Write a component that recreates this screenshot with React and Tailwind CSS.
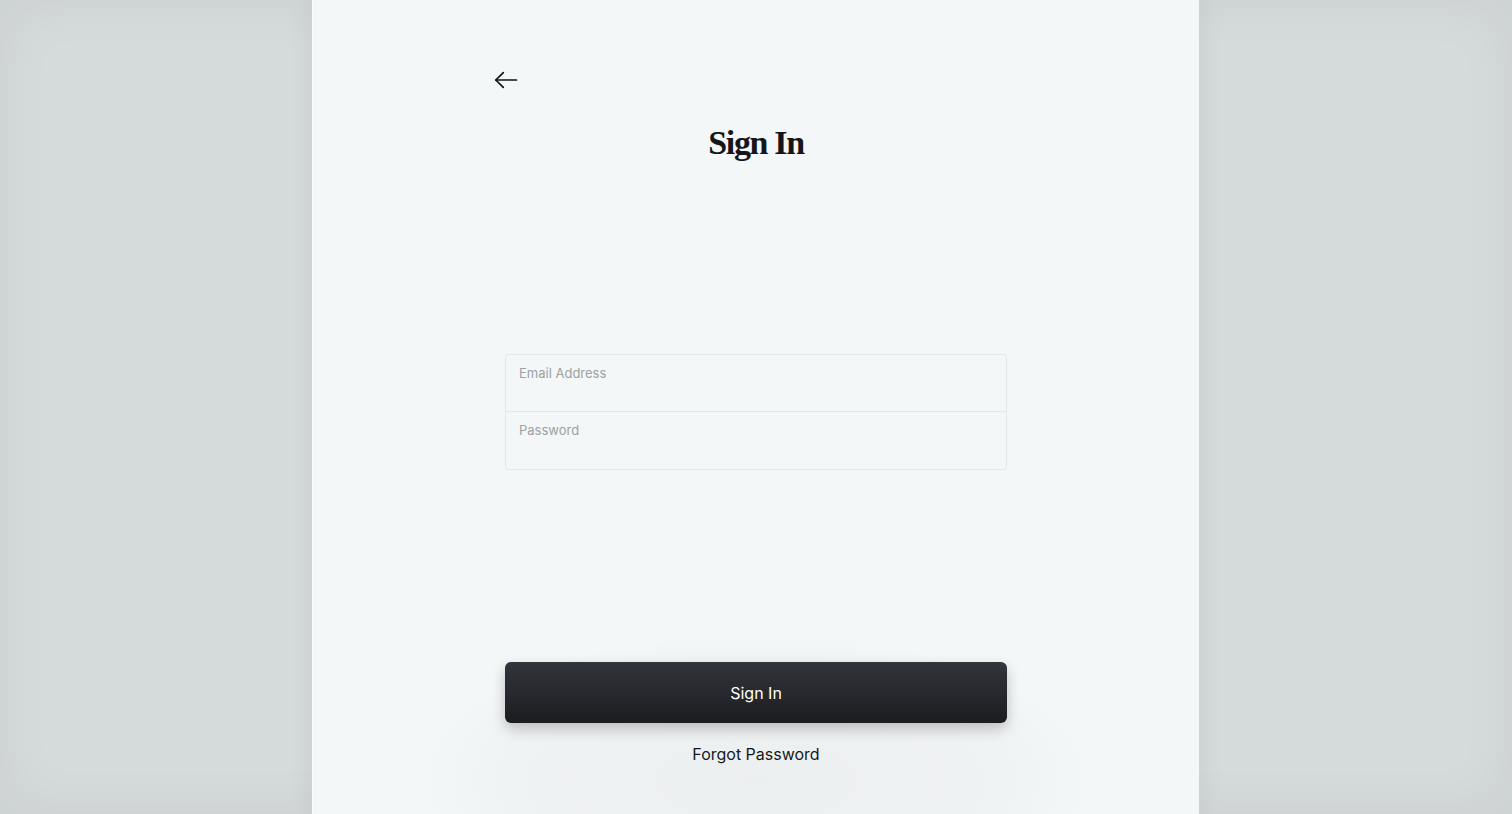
// Sign-in screen: centered card over a grey backdrop
const sans = { fontFamily: "Inter, 'Liberation Sans', sans-serif" };

function BackArrow() {
  return (
    <svg width="24" height="18" viewBox="0 0 24 18" fill="none" stroke="#111" strokeWidth="1.7" strokeLinecap="round" strokeLinejoin="round">
      <path d="M22.5 9H1.8" />
      <path d="M9.3 1.6 1.8 9l7.5 7.4" />
    </svg>
  );
}

function Field({ label, type, last }) {
  return (
    <label className={`flex h-[57px] flex-col px-[13px] pt-[8px] ${last ? "" : "border-b border-[#e3e7e9]"}`}>
      <span className="text-[13px] leading-[20px] text-[#9ba1a4]">{label}</span>
      <input type={type} className="w-full bg-transparent text-[15px] text-[#1b1c1f] outline-none" />
    </label>
  );
}

export default function App() {
  return (
    <div
      className="flex h-[814px] w-full overflow-hidden bg-[#d5dada] pl-[312px] shadow-[inset_0_0_60px_rgba(0,0,0,0.05)]"
      style={sans}
    >
      <div className="relative flex h-full w-[887px] flex-col items-center border-l border-white/60 bg-[#f4f7f8] pt-[68px] shadow-[0_0_24px_rgba(0,0,0,0.07)]">
        {/* soft glow around the action area */}
        <div className="pointer-events-none absolute left-1/2 top-[630px] h-[300px] w-[680px] -translate-x-1/2 rounded-[50%] bg-[radial-gradient(ellipse_at_center,rgba(0,0,0,0.03)_0%,rgba(0,0,0,0.018)_50%,rgba(0,0,0,0)_70%)]" />

        <div className="relative w-[524px]">
          <button className="flex h-6 items-center" aria-label="Back">
            <BackArrow />
          </button>
        </div>

        <h1
          className="relative mt-[31px] text-[34px] font-bold leading-[40px] tracking-[-0.04em] text-[#15161a]"
          style={{ fontFamily: "'Liberation Serif', 'DejaVu Serif', serif" }}
        >
          Sign In
        </h1>

        <div className="relative mt-[191px] w-[502px] rounded-[4px] border border-[#e3e7e9]">
          <Field label="Email Address" type="email" />
          <Field label="Password" type="password" last />
        </div>

        <button className="relative mt-[192px] h-[61px] w-[502px] rounded-[6px] bg-gradient-to-b from-[#32353b] to-[#1c1d21] text-[16px] text-white shadow-[0_6px_14px_rgba(0,0,0,0.22)]">
          Sign In
        </button>

        <button className="relative mt-[19px] text-[16px] leading-[24px] text-[#17181b]">
          Forgot Password
        </button>
      </div>
    </div>
  );
}
